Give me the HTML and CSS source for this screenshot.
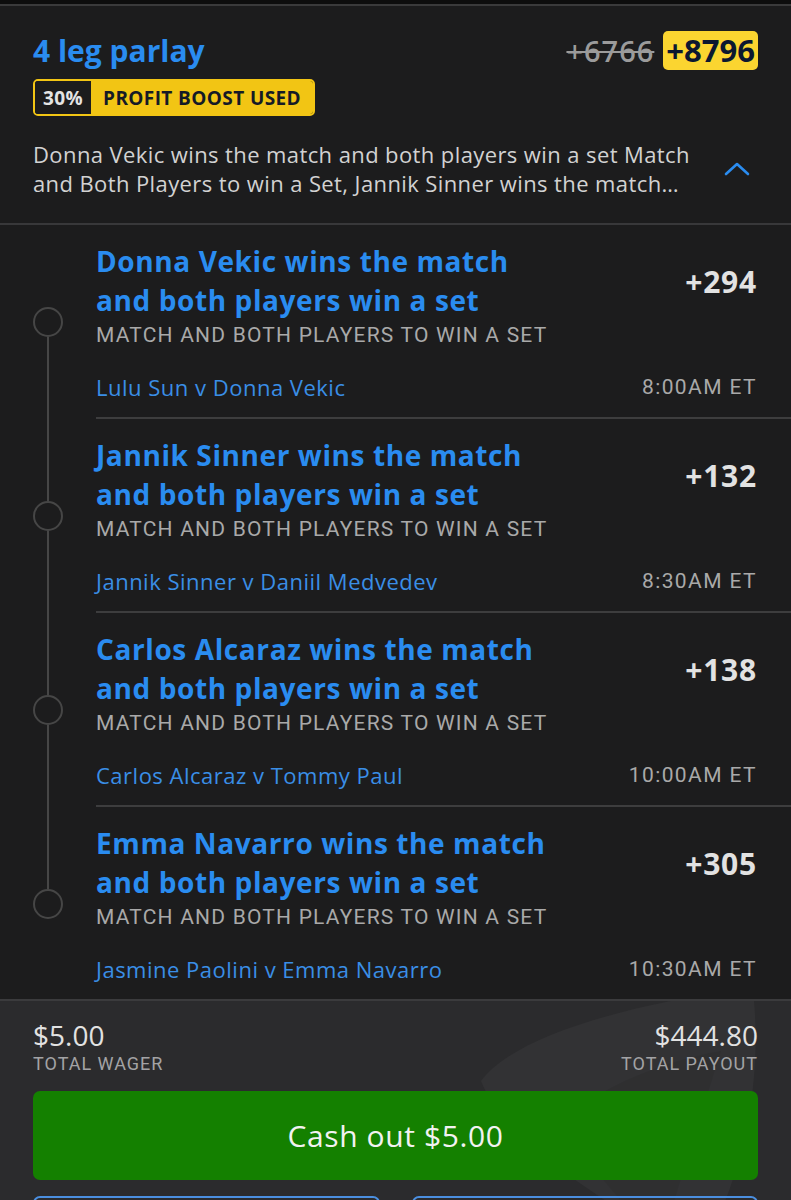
FILE: index.html
```html
<!DOCTYPE html>
<html lang="en">
<head>
    <meta charset="UTF-8">
    <meta name="viewport" content="width=device-width, initial-scale=1.0">
    <link rel="stylesheet" href="styles.css">
</head>
<body>

    <div class="top-strip"></div>

    <header class="bet-header">
        <div class="title-row">
            <h1 class="parlay-title">4 leg parlay</h1>
            <div class="odds-pair">
                <span class="odds-old">+6766</span>
                <span class="odds-new">+8796</span>
            </div>
        </div>

        <div class="boost-badge">
            <span class="boost-pct">30%</span>
            <span class="boost-label">PROFIT BOOST USED</span>
        </div>

        <div class="summary-row">
            <p class="summary">Donna Vekic wins the match and both players win a set Match and Both Players to win a Set, Jannik Sinner wins the match and both players win a set Match and Both Players to win a Set</p>
            <svg class="chevron" width="26" height="16" viewBox="0 0 26 16">
                <path d="M2 13 L13 3 L24 13" fill="none" stroke="#2a8cf0" stroke-width="2.6" stroke-linecap="round" stroke-linejoin="round"/>
            </svg>
        </div>
    </header>

    <!-- legs of the parlay -->
    <section class="legs">

        <div class="leg first">
            <div class="rail">
                <div class="rail-top"></div>
                <div class="rail-dot"></div>
                <div class="rail-bottom"></div>
            </div>
            <div class="leg-body">
                <div class="leg-head">
                    <h2 class="leg-title">Donna Vekic wins the match and both players win a set</h2>
                    <span class="leg-odds">+294</span>
                </div>
                <div class="leg-market">MATCH AND BOTH PLAYERS TO WIN A SET</div>
                <div class="leg-foot">
                    <span class="leg-event">Lulu Sun v Donna Vekic</span>
                    <span class="leg-time">8:00AM ET</span>
                </div>
            </div>
        </div>

        <div class="leg">
            <div class="rail">
                <div class="rail-top"></div>
                <div class="rail-dot"></div>
                <div class="rail-bottom"></div>
            </div>
            <div class="leg-body">
                <div class="leg-head">
                    <h2 class="leg-title">Jannik Sinner wins the match and both players win a set</h2>
                    <span class="leg-odds">+132</span>
                </div>
                <div class="leg-market">MATCH AND BOTH PLAYERS TO WIN A SET</div>
                <div class="leg-foot">
                    <span class="leg-event">Jannik Sinner v Daniil Medvedev</span>
                    <span class="leg-time">8:30AM ET</span>
                </div>
            </div>
        </div>

        <div class="leg">
            <div class="rail">
                <div class="rail-top"></div>
                <div class="rail-dot"></div>
                <div class="rail-bottom"></div>
            </div>
            <div class="leg-body">
                <div class="leg-head">
                    <h2 class="leg-title">Carlos Alcaraz wins the match and both players win a set</h2>
                    <span class="leg-odds">+138</span>
                </div>
                <div class="leg-market">MATCH AND BOTH PLAYERS TO WIN A SET</div>
                <div class="leg-foot">
                    <span class="leg-event">Carlos Alcaraz v Tommy Paul</span>
                    <span class="leg-time">10:00AM ET</span>
                </div>
            </div>
        </div>

        <div class="leg last">
            <div class="rail">
                <div class="rail-top"></div>
                <div class="rail-dot"></div>
                <div class="rail-bottom"></div>
            </div>
            <div class="leg-body">
                <div class="leg-head">
                    <h2 class="leg-title">Emma Navarro wins the match and both players win a set</h2>
                    <span class="leg-odds">+305</span>
                </div>
                <div class="leg-market">MATCH AND BOTH PLAYERS TO WIN A SET</div>
                <div class="leg-foot">
                    <span class="leg-event">Jasmine Paolini v Emma Navarro</span>
                    <span class="leg-time">10:30AM ET</span>
                </div>
            </div>
        </div>

    </section>

    <footer class="bet-footer">
        <svg class="watermark" width="300" height="200" viewBox="0 0 300 200">
            <path d="M10 80 C 40 40, 130 10, 255 -10 L 282 -10 C 290 60, 280 140, 250 210 L 150 210 C 90 170, 30 130, 10 80 Z" fill="#ffffff" fill-opacity="0.035"/>
            <path d="M95 120 C 120 90, 190 60, 250 50 L 200 210 L 160 210 C 130 180, 110 150, 95 120 Z" fill="#000000" fill-opacity="0.06"/>
        </svg>

        <div class="totals">
            <div class="total">
                <div class="total-amount">$5.00</div>
                <div class="total-label">TOTAL WAGER</div>
            </div>
            <div class="total right">
                <div class="total-amount">$444.80</div>
                <div class="total-label">TOTAL PAYOUT</div>
            </div>
        </div>

        <button class="cashout">Cash out $5.00</button>

        <div class="action-row">
            <button class="outline-btn"></button>
            <button class="outline-btn"></button>
        </div>
    </footer>

</body>
</html>
```

FILE: styles.css
```css
body {
    font-family: 'Open Sans', 'Noto Sans', sans-serif;
    margin: 0;
    padding: 0;
    background-color: #1c1c1d;
    color: #d6d6d6;
    width: 791px;
    height: 1200px;
    overflow: hidden;
}

.top-strip {
    height: 4px;
    background-color: #0d0d0d;
}

/* Header card */
.bet-header {
    border-top: 2px solid #3a3a3b;
    border-bottom: 2px solid #38383a;
    padding: 24px 33px 25px 33px;
}

.title-row {
    display: flex;
    justify-content: space-between;
    align-items: center;
    height: 40px;
}

.parlay-title {
    margin: 0;
    font-size: 30px;
    font-weight: 700;
    color: #2a8cf0;
}

.odds-pair {
    display: flex;
    align-items: center;
    gap: 9px;
}

.odds-old {
    font-size: 29px;
    font-weight: 600;
    letter-spacing: 1px;
    color: #9b9b9b;
    text-decoration: line-through;
    text-decoration-thickness: 2px;
}

.odds-new {
    background-color: #fbd530;
    color: #0c1830;
    font-size: 31px;
    font-weight: 700;
    line-height: 39px;
    padding: 0 3px;
    border-radius: 5px;
}

.boost-badge {
    display: inline-flex;
    margin-top: 9px;
    height: 37px;
    border: 2px solid #f2c514;
    border-radius: 5px;
    box-sizing: border-box;
    overflow: hidden;
    font-size: 19px;
    font-weight: 700;
    letter-spacing: 0.4px;
}

.boost-pct {
    display: flex;
    align-items: center;
    padding: 0 8px;
    background-color: #1c1c1d;
    color: #e4e4e4;
}

.boost-label {
    display: flex;
    align-items: center;
    padding: 0 12px;
    background-color: #f2c514;
    color: #151a26;
}

.summary-row {
    display: flex;
    align-items: center;
    justify-content: space-between;
    margin-top: 24px;
}

.summary {
    margin: 0;
    width: 668px;
    font-size: 22px;
    line-height: 29px;
    letter-spacing: 0.4px;
    color: #d2d2d2;
    display: -webkit-box;
    -webkit-line-clamp: 2;
    -webkit-box-orient: vertical;
    overflow: hidden;
}

.chevron {
    margin-right: 8px;
}

/* Legs */
.legs {
    height: 774px;
    overflow: hidden;
}

.leg {
    display: flex;
}

.rail {
    width: 96px;
    flex-shrink: 0;
    display: flex;
    flex-direction: column;
    align-items: center;
}

.rail-top {
    width: 2px;
    height: 82px;
    background-color: #464646;
}

.rail-dot {
    width: 26px;
    height: 26px;
    border: 2px solid #464646;
    border-radius: 50%;
    flex-shrink: 0;
}

.rail-bottom {
    width: 2px;
    flex: 1;
    background-color: #464646;
}

.leg.first .rail-top,
.leg.last .rail-bottom {
    background-color: transparent;
}

.leg-body {
    flex: 1;
    border-bottom: 2px solid #3d3d3e;
    padding: 17px 34px 18px 0;
}

.leg-head {
    display: flex;
    justify-content: space-between;
    align-items: center;
}

.leg-title {
    margin: 0;
    width: 450px;
    font-size: 28px;
    line-height: 39px;
    letter-spacing: 0.6px;
    font-weight: 700;
    color: #2a8cf0;
}

.leg-odds {
    font-size: 30px;
    font-weight: 700;
    letter-spacing: 0.8px;
    color: #e2e2e2;
}

.leg-market {
    margin-top: 3px;
    font-family: 'Roboto', sans-serif;
    font-size: 21px;
    line-height: 24px;
    letter-spacing: 1.2px;
    color: #a9a9a9;
}

.leg-foot {
    display: flex;
    justify-content: space-between;
    align-items: center;
    height: 24px;
    margin-top: 28px;
    line-height: 24px;
}

.leg-event {
    font-size: 22px;
    letter-spacing: 0.5px;
    color: #3a8ee6;
}

.leg-time {
    font-family: 'Roboto', sans-serif;
    font-size: 21px;
    letter-spacing: 1.4px;
    color: #a9a9a9;
}

/* Footer */
.bet-footer {
    position: relative;
    background-color: #2b2b2d;
    border-top: 2px solid #3b3b3d;
    padding: 19px 33px 0 33px;
    height: 200px;
    overflow: hidden;
}

.watermark {
    position: absolute;
    right: 20px;
    top: 0;
}

.totals {
    position: relative;
    display: flex;
    justify-content: space-between;
}

.total.right {
    text-align: right;
}

.total-amount {
    font-size: 28px;
    line-height: 30px;
    color: #e2e2e2;
}

.total-label {
    margin-top: 3px;
    font-family: 'Roboto', sans-serif;
    font-size: 18px;
    line-height: 22px;
    letter-spacing: 1px;
    color: #a3a3a5;
}

.cashout {
    position: relative;
    display: block;
    width: 100%;
    height: 89px;
    margin-top: 16px;
    border: none;
    border-radius: 7px;
    background-color: #148000;
    color: #f2f2f2;
    font-family: 'Open Sans', sans-serif;
    font-size: 30px;
    letter-spacing: 0.6px;
}

.action-row {
    position: relative;
    display: flex;
    gap: 32px;
    margin-top: 16px;
}

.outline-btn {
    flex: 1;
    height: 50px;
    background-color: transparent;
    border: 2px solid #4b8fe0;
    border-radius: 7px;
}
```
